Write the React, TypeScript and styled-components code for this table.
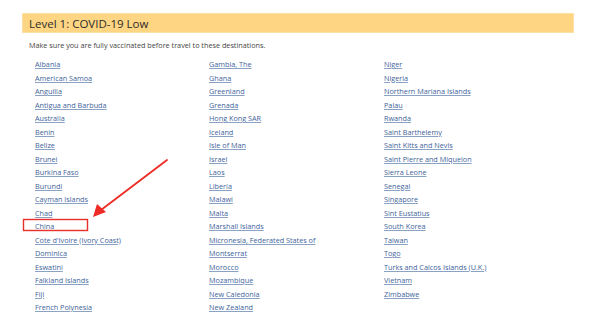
import React from "react";
import styled, { createGlobalStyle } from "styled-components";

const Global = createGlobalStyle`
  html, body { margin: 0; padding: 0; background: #ffffff; }
  body { font-family: "Open Sans", "Liberation Sans", sans-serif; }
`;

const Page = styled.div`
  position: relative;
  width: 600px;
  height: 329px;
  overflow: hidden;
  background: #fff;
  padding: 13px 26px 0 22px;
  box-sizing: border-box;
`;

const Header = styled.div`
  height: 20px;
  background: #fed683;
  box-shadow: inset 0 0 0 1px #fde1a4;
  display: flex;
  align-items: center;
  padding-left: 7px;
  font-size: 11.5px;
  color: #2b2b2b;
  font-weight: 500;
`;

const Intro = styled.p`
  margin: 0;
  padding: 6px 0 0 7px;
  font-size: 7.25px;
  line-height: 12px;
  color: #444;
`;

const Columns = styled.div`
  display: grid;
  grid-template-columns: 174px 175px 175px;
  padding: 7px 0 0 13px;
`;

const Column = styled.ul`
  list-style: none;
  margin: 0;
  padding: 0;
`;

const Item = styled.li`
  height: 13.5px;
  line-height: 13.5px;
  font-size: 7.25px;
`;

const Link = styled.a`
  color: #41639a;
  text-decoration: underline;
  text-decoration-color: #8aa2c4;
  text-underline-offset: 1px;
`;

const Overlay = styled.svg`
  position: absolute;
  left: 0;
  top: 0;
  pointer-events: none;
`;

const col1 = [
  "Albania",
  "American Samoa",
  "Anguilla",
  "Antigua and Barbuda",
  "Australia",
  "Benin",
  "Belize",
  "Brunei",
  "Burkina Faso",
  "Burundi",
  "Cayman Islands",
  "Chad",
  "China",
  "Cote d'Ivoire (Ivory Coast)",
  "Dominica",
  "Eswatini",
  "Falkland Islands",
  "Fiji",
  "French Polynesia",
];

const col2 = [
  "Gambia, The",
  "Ghana",
  "Greenland",
  "Grenada",
  "Hong Kong SAR",
  "Iceland",
  "Isle of Man",
  "Israel",
  "Laos",
  "Liberia",
  "Malawi",
  "Malta",
  "Marshall Islands",
  "Micronesia, Federated States of",
  "Montserrat",
  "Morocco",
  "Mozambique",
  "New Caledonia",
  "New Zealand",
];

const col3 = [
  "Niger",
  "Nigeria",
  "Northern Mariana Islands",
  "Palau",
  "Rwanda",
  "Saint Barthelemy",
  "Saint Kitts and Nevis",
  "Saint Pierre and Miquelon",
  "Sierra Leone",
  "Senegal",
  "Singapore",
  "Sint Eustatius",
  "South Korea",
  "Taiwan",
  "Togo",
  "Turks and Caicos Islands (U.K.)",
  "Vietnam",
  "Zimbabwe",
];

export default function App() {
  return (
    <>
      <Global />
      <Page>
        <Header>Level 1: COVID-19 Low</Header>
        <Intro>Make sure you are fully vaccinated before travel to these destinations.</Intro>
        <Columns>
          {[col1, col2, col3].map((col, i) => (
            <Column key={i}>
              {col.map((name) => (
                <Item key={name}>
                  <Link href="#">{name}</Link>
                </Item>
              ))}
            </Column>
          ))}
        </Columns>
        <Overlay width="600" height="329" viewBox="0 0 600 329">
          <rect x="23.5" y="219.5" width="64" height="11" fill="none" stroke="#e8302a" strokeWidth="1.4" />
          <line x1="167" y1="160" x2="101" y2="210" stroke="#ee2b25" strokeWidth="1.8" strokeLinecap="round" />
          <polygon points="93,217 97,204 106,212" fill="#ee2b25" />
        </Overlay>
      </Page>
    </>
  );
}
